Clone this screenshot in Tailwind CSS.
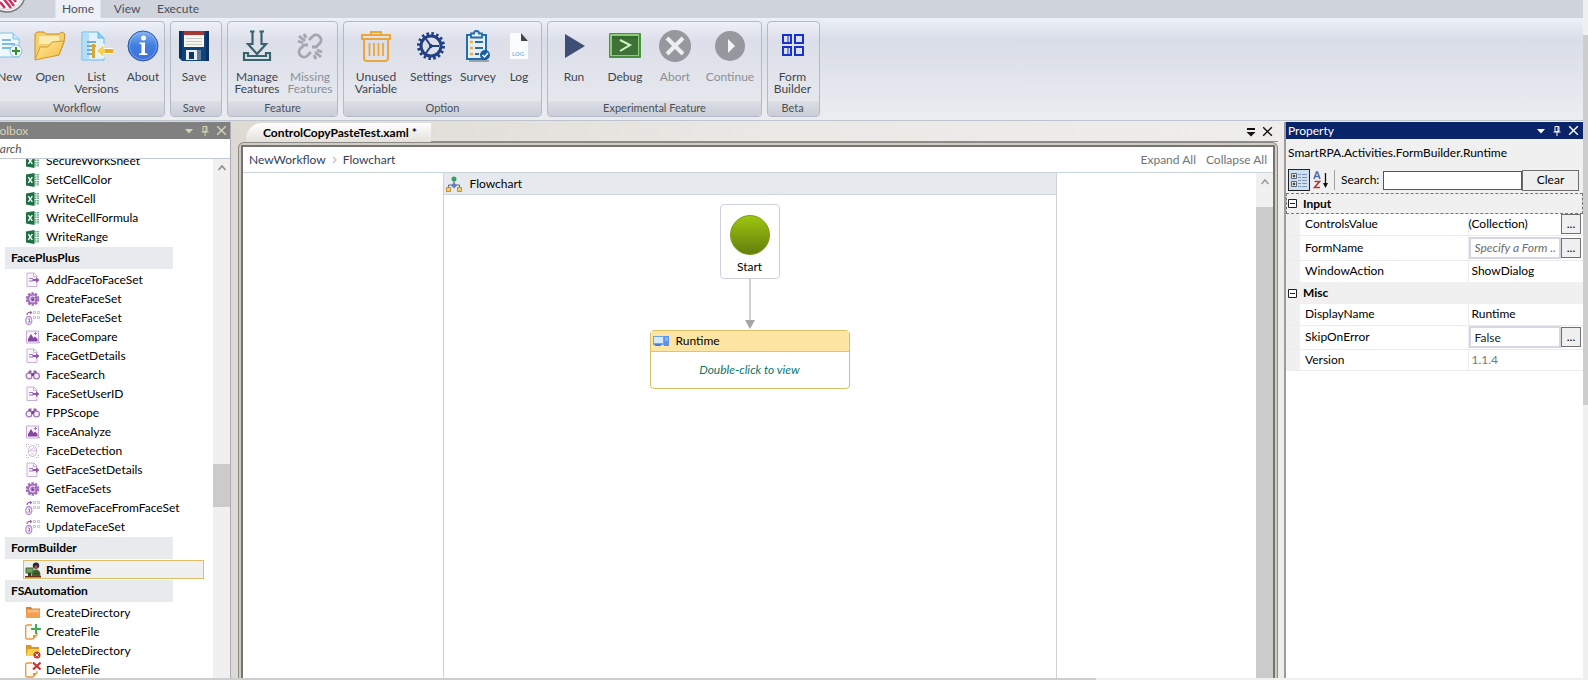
<!DOCTYPE html>
<html lang="en">
<head>
  <meta charset="UTF-8" />
  <title>ControlCopyPasteTest.xaml</title>
  <meta name="viewport" content="width=device-width, initial-scale=1" />
  <script src="https://cdn.jsdelivr.net/npm/@tailwindcss/browser@4"></script>
</head>
<body class="h-screen flex flex-col overflow-hidden bg-[#f0f0f0] font-['Lato','Open_Sans',sans-serif] text-xs text-black">

  <!-- icon sprites -->
  <svg class="hidden">
    <symbol id="i-excel" viewBox="0 0 16 16">
      <path d="M10.500 2v12M13 2v12" stroke="#6fae8a" stroke-width="2" stroke-dasharray="1.500 .8" />
      <path d="M1 2.500 9.500 1v14L1 13.500z" fill="#1d7044" />
      <path d="m3.300 5.200 4 5.600M7.300 5.200l-4 5.600" stroke="#fff" stroke-width="1.400" />
    </symbol>
    <symbol id="i-page" viewBox="0 0 16 16">
      <path d="M2 1h7l3 3v10.500H2z" fill="#fbf7fd" />
      <path d="M12 5.500V4L9 1H2v13.500h10V10" fill="none" stroke="#cbb0d8" />
      <path d="M8.500 1v3.500H12" fill="none" stroke="#cbb0d8" />
      <path d="M4 6.500h4M4 9h4" stroke="#a573bf" />
      <path d="M7.500 7h3.500V5l3.500 3L11 11V9H7.500z" fill="#8f5aa9" />
    </symbol>
    <symbol id="i-gear" viewBox="0 0 16 16">
      <circle cx="7.500" cy="8" r="5.800" fill="none" stroke="#a06abb" stroke-width="2" stroke-dasharray="2.500 1.144" />
      <circle cx="7.500" cy="8" r="5.300" fill="#a06abb" />
      <path d="M10 6A3 3 0 1 0 10 10M7.500 8h3" fill="none" stroke="#f3e9f8" stroke-width="1.200" />
      <path d="M7 7.500h2v2H7z" fill="#7a3f99" />
    </symbol>
    <symbol id="i-set" viewBox="0 0 16 16">
      <path d="M8.500 1.500h2v2h-2zM12.500 1.500h2v2h-2zM8.500 6.500h2v2h-2zM12.500 6.500h2v2h-2z" fill="none" stroke="#cfc0d8" />
      <path d="M2 5C2 3 4 2 6 2.500" fill="none" stroke="#8a6a9c" stroke-width="1.300" />
      <path d="m5 .8 2.500 1.700L5 4.500z" fill="#8a6a9c" />
      <ellipse cx="3.800" cy="10.500" rx="3" ry="4" fill="#faf5fc" stroke="#b48fc8" stroke-width="1.300" />
      <path d="M3 9h1.500v3M2.800 12h2.500" fill="none" stroke="#a06abb" />
    </symbol>
    <symbol id="i-image" viewBox="0 0 16 16">
      <path d="M1.500 2h12v12h-12z" fill="#faf5fc" stroke="#c4a9d2" />
      <path d="M3 12.500V10l3-5 2.500 4L10 7.500l2.500 2.500v2.500z" fill="#83479f" />
      <path d="M9 4.500h3M10.500 3v3" stroke="#a573bf" />
      <path d="m12 11 3 3" stroke="#b695c7" />
    </symbol>
    <symbol id="i-binoc" viewBox="0 0 16 16">
      <path d="M4 3.500h2.500v3h2v-3H11l2 4h-11z" fill="#8f5aa9" />
      <circle cx="4" cy="9" r="2.900" fill="#f8f1fb" stroke="#a678bd" stroke-width="1.300" />
      <circle cx="11.500" cy="9" r="2.900" fill="#f8f1fb" stroke="#a678bd" stroke-width="1.300" />
      <path d="M6.500 6h2.500v3H6.500z" fill="#7b4499" />
    </symbol>
    <symbol id="i-detect" viewBox="0 0 16 16">
      <path d="M1.500 4V1.500H4M11 1.500h2.500V4M1.500 12v2.500H4M11 14.500h2.500V12" fill="none" stroke="#b9a6c4" stroke-dasharray="1 1" />
      <path d="M3.500 6.500a4 4 0 0 1 8 0v3a4 4 0 0 1-8 0zM3 8h9M5 6.500c2 0 3-1 3.500-2 .5 1 1.500 2 3 2M6 11h3" fill="none" stroke="#ceb9da" />
    </symbol>
    <symbol id="i-person" viewBox="0 0 16 16">
      <circle cx="11" cy="3.600" r="3.200" fill="#272a33" />
      <path d="M9.500 3.500h3v3h-3z" fill="#a84a48" />
      <path d="M6.500 14c0-4 1.500-6.500 4.500-6.500s4.500 2.500 4.500 6.500z" fill="#43612f" />
      <path d="M1 6h7v5H1z" fill="#6fa25e" stroke="#456b3a" />
      <path d="M0 14h16v1.500H0z" fill="#6f2c20" />
      <path d="M3 11h3v3H3zM9 11h5v1H9z" fill="#2e4426" />
    </symbol>
    <symbol id="i-folder" viewBox="0 0 16 16">
      <path d="M1 2h5l1 1.500h8V13H1z" fill="#d98231" />
      <path d="M2 4.500h12.500v7.500H2z" fill="#f8bd7c" />
      <path d="M1 7.500h14V13H1z" fill="#f0a04e" />
    </symbol>
    <symbol id="i-newfile" viewBox="0 0 16 16">
      <path d="M7 1H2A1.500 1.500 0 0 0 .7 2.500v11A1.500 1.500 0 0 0 2 15h6l4-4V9" fill="#fffaf3" stroke="#e29a45" stroke-width="1.300" />
      <path d="M8 15v-4h4z" fill="#e29a45" />
      <path d="M11 0v10M6 5h10" stroke="#3fae5a" stroke-width="2" />
    </symbol>
    <symbol id="i-delfolder" viewBox="0 0 16 16">
      <path d="M1 2h5l1 2h7v9H1z" fill="#d59a21" />
      <path d="M3 6h12l-2 7H1z" fill="#f8d24e" />
      <circle cx="12" cy="12" r="3.500" fill="#c73a2c" />
      <path d="m10.500 10.500 3 3M13.500 10.500l-3 3" stroke="#fff" />
    </symbol>
    <symbol id="i-delfile" viewBox="0 0 16 16">
      <path d="M7 1H2A1.500 1.500 0 0 0 .7 2.500v11A1.500 1.500 0 0 0 2 15h6l4-4V9" fill="#fffaf3" stroke="#e29a45" stroke-width="1.300" />
      <path d="M8 15v-4h4z" fill="#e29a45" />
      <path d="m8 .5 7.500 7M15.500.5 8 7.500" stroke="#cf2a2a" stroke-width="2" />
    </symbol>
    <symbol id="i-down" viewBox="0 0 12 12"><path d="M2 4h8L6 8.500z" fill="currentColor" /></symbol>
    <symbol id="i-pin" viewBox="0 0 12 12">
      <path d="M4 1.500h4v5H4zM7 1.500v5M2.500 7h7M6 7v4" fill="none" stroke="currentColor" />
    </symbol>
    <symbol id="i-close" viewBox="0 0 12 12"><path d="m2 2 8 8M10 2l-8 8" stroke="currentColor" stroke-width="1.300" /></symbol>
    <symbol id="i-up" viewBox="0 0 10 10"><path d="m1.500 7 3.500-4 3.500 4" fill="none" stroke="currentColor" stroke-width="1.500" /></symbol>
    <symbol id="i-minus" viewBox="0 0 9 9"><path d="M.5.5h8v8h-8zM2 4.500h5" fill="#fff" stroke="#222" /></symbol>
  </svg>

  <div class="flex flex-1 min-h-0">
    <div class="flex-1 min-w-0 flex flex-col">

      <!-- ribbon -->
      <header class="bg-[#cfd3dc]">
        <nav class="flex h-[18px] items-end text-[#4a4f5a] relative pl-[55px] overflow-hidden">
          <svg class="absolute left-0 top-0" width="28" height="14" viewBox="0 0 28 14">
            <circle cx="7" cy="-6" r="18" fill="#f3f3f5" stroke="#77797f" stroke-width="1.500" />
            <circle cx="7" cy="-6" r="15.500" fill="#fff" stroke="#d0d0d4" />
            <path d="m0 2 5 6M3-2l8 10M8-2l6 8M13-2l3 4" stroke="#cf2f5c" stroke-width="2.500" />
          </svg>
          <a href="#" class="w-[46px] h-[18px] bg-[#edf0f7] border-x border-[#dfe3ec] text-center leading-[18px]">Home</a>
          <a href="#" class="w-[52px] text-center leading-[18px]">View</a>
          <a href="#" class="w-[50px] text-center leading-[18px]">Execute</a>
        </nav>
        <div class="flex gap-[5px] h-[103px] pt-[3px] pb-[3px] border-b border-[#bfc5cf] bg-linear-to-b from-[#edf0f7] from-0% via-[#d9dde7] via-22% to-[#ebedf1]">

          <section class="w-44 -ml-[11px] shrink-0 flex flex-col rounded border border-[#b4bac5] bg-linear-to-b from-[#edf0f8] via-[#dcdfe9] via-20% to-[#e8eaef] overflow-hidden">
            <div class="flex-1 flex items-start pt-2 text-[#40454f]">
              <button class="w-[39px] flex flex-col items-center leading-3 gap-[9px]">
                <svg width="32" height="32" viewBox="0 0 32 32">
                  <path d="M4 3h15l6 6v18H4z" fill="#eef8fe" stroke="#7fc1e8" /><path d="M19 3v6h6" fill="#cbe8f8" stroke="#7fc1e8" />
                  <path d="M8 10h9M8 14h13M8 18h12" stroke="#7cb9e4" stroke-width="2" />
                  <circle cx="22" cy="21" r="6" fill="#f4fbff" stroke="#82bfe2" /><path d="M22 17v8M18 21h8" stroke="#35912f" stroke-width="2" />
                </svg>
                <span>New</span>
              </button>
              <button class="w-[42px] flex flex-col items-center leading-3 gap-[9px]">
                <svg width="32" height="32" viewBox="0 0 32 32">
                  <defs><linearGradient id="gf" x2="1" y2="1"><stop stop-color="#ffe9a0" /><stop offset="1" stop-color="#f5bb3f" /></linearGradient></defs>
                  <path d="M1 29V4l2-2h7l2 2h13l3-2 3 2-1 8-5 13z" fill="#f5cf6d" stroke="#c98f27" />
                  <path d="M5 6h20v8H5z" fill="#fdebb0" />
                  <path d="m1 30 5-13h8l4-5 12-1-5 14z" fill="url(#gf)" stroke="#d29c35" />
                </svg>
                <span>Open</span>
              </button>
              <button class="w-[51px] flex flex-col items-center leading-3 gap-[9px]">
                <svg width="32" height="32" viewBox="0 0 32 32">
                  <path d="M1 2h16l6 6v22H1z" fill="#dff2fc" stroke="#67b7e6" /><path d="M2 3h6v26H2z" fill="#b4def6" /><path d="M17 2v6h6" fill="#8fcbee" stroke="#67b7e6" />
                  <path d="M6 12h9M6 16h9M6 20h7M6 24h8" stroke="#5797c9" stroke-width="1.500" />
                  <path d="M11 14h3v14h-3z" fill="#d9a62e" />
                  <path d="M32 18.500h-9V14l-8 7 8 7v-4.500h9z" fill="#f8cf59" stroke="#fff" />
                  <path d="M24 19h8v4h-8z" fill="#eda922" />
                </svg>
                <span>List<br />Versions</span>
              </button>
              <button class="w-[42px] flex flex-col items-center leading-3 gap-[9px]">
                <svg width="32" height="32" viewBox="0 0 32 32">
                  <defs><linearGradient id="gi" x2="0" y2="1"><stop stop-color="#83b2f0" /><stop offset=".5" stop-color="#3f7ee0" /><stop offset="1" stop-color="#3f6fd6" /></linearGradient></defs>
                  <circle cx="16" cy="16" r="15" fill="url(#gi)" stroke="#2c5aa8" />
                  <circle cx="16" cy="16" r="13.500" fill="none" stroke="#8fb8f3" stroke-opacity=".6" />
                  <circle cx="16.500" cy="8" r="2.500" fill="#fff" />
                  <path d="M12.500 12.500H18V23l2.500.8V25h-8.500v-1.200l2.500-.8v-8.500l-2-.8z" fill="#fff" />
                </svg>
                <span>About</span>
              </button>
            </div>
            <h2 class="h-[15px] leading-[13px] text-center text-[11px] text-[#4a4f5a] bg-linear-to-b from-[#dcdfe6] to-[#c9cdd7]">Workflow</h2>
          </section>

          <section class="w-[52px] shrink-0 flex flex-col rounded border border-[#b4bac5] bg-linear-to-b from-[#edf0f8] via-[#dcdfe9] via-20% to-[#e8eaef] overflow-hidden">
            <div class="flex-1 flex items-start pt-2 text-[#40454f]">
              <button class="w-[46px] flex flex-col items-center leading-3 gap-[9px]">
                <svg width="32" height="32" viewBox="0 0 32 32">
                  <path d="M1 1h30v30H4l-3-3z" fill="#10427c" /><path d="M1 1h3v27H1zM28 1h3v30h-3z" fill="#0b2f5e" />
                  <path d="M6 1h20v16H6z" fill="#f5f5f1" /><path d="M6 1h20v4H6z" fill="#a8382f" />
                  <path d="M8 8.500h16M8 11.500h16M8 14.500h16" stroke="#c9c9c4" />
                  <path d="M8 20h15v10H8z" fill="#e9edf0" /><path d="M11 22h5v7h-5z" fill="#0f3564" /><path d="M19 20h4v10h-4z" fill="#5f7f9c" />
                </svg>
                <span>Save</span>
              </button>
            </div>
            <h2 class="h-[15px] leading-[13px] pr-1 text-center text-[11px] text-[#4a4f5a] bg-linear-to-b from-[#dcdfe6] to-[#c9cdd7]">Save</h2>
          </section>

          <section class="w-[111px] shrink-0 flex flex-col rounded border border-[#b4bac5] bg-linear-to-b from-[#edf0f8] via-[#dcdfe9] via-20% to-[#e8eaef] overflow-hidden">
            <div class="flex-1 flex items-start pt-2 pl-0.5 text-[#40454f]">
              <button class="w-[54px] flex flex-col items-center leading-3 gap-[9px]">
                <svg width="32" height="32" viewBox="0 0 32 32" fill="none" stroke="#37646c" stroke-width="2.200">
                  <path d="M11.500 1.500V14H7l9 10 9-10h-4.500V1.500M9 1.500h4.500M18.500 1.500H23" />
                  <path d="M7 23H3v7h26v-7h-4v3H7z" />
                </svg>
                <span>Manage<br />Features</span>
              </button>
              <button disabled class="w-[52px] flex flex-col items-center leading-3 gap-[9px] text-[#8b8f97]">
                <svg width="32" height="32" viewBox="0 0 32 32" fill="none" stroke="#a3a6ad" stroke-width="2.800">
                  <path d="m15 10 4-4a5 5 0 0 1 7 7l-4 4h-4M17 22l-4 4a5 5 0 0 1-7-7l4-4h4M5 6l6 5M10 4l2 4M21 22l6 5M20 25l2 4M23 20l5 2M4 11l5 2" />
                </svg>
                <span>Missing<br />Features</span>
              </button>
            </div>
            <h2 class="h-[15px] leading-[13px] text-center text-[11px] text-[#4a4f5a] bg-linear-to-b from-[#dcdfe6] to-[#c9cdd7]">Feature</h2>
          </section>

          <section class="w-[199px] shrink-0 flex flex-col rounded border border-[#b4bac5] bg-linear-to-b from-[#edf0f8] via-[#dcdfe9] via-20% to-[#e8eaef] overflow-hidden">
            <div class="flex-1 flex items-start pt-2 pl-[3px] text-[#40454f]">
              <button class="w-[58px] flex flex-col items-center leading-3 gap-[9px]">
                <svg width="32" height="32" viewBox="0 0 32 32" fill="none" stroke="#eba63c" stroke-width="2">
                  <path d="M11 5V2h10v3M2 5h28v4H2zM4 9v19a3 3 0 0 0 3 3h18a3 3 0 0 0 3-3V9" />
                  <path d="M9.500 13v13M14 13v13M18.500 13v13M23 13v13" stroke-width="1.800" />
                </svg>
                <span>Unused<br />Variable</span>
              </button>
              <button class="w-[52px] flex flex-col items-center leading-3 gap-[9px]">
                <svg width="32" height="32" viewBox="0 0 32 32" fill="none" stroke="#213f82">
                  <circle cx="16" cy="16" r="12.500" stroke-width="3" stroke-dasharray="2.500 2.409" />
                  <circle cx="16" cy="16" r="10" stroke-width="3" />
                  <path d="M16 16h8M16 16l-5-7M16 16l-5 7" stroke-width="2" />
                  <circle cx="16" cy="16" r="1.500" fill="#213f82" />
                </svg>
                <span>Settings</span>
              </button>
              <button class="w-[42px] flex flex-col items-center leading-3 gap-[9px]">
                <svg width="32" height="32" viewBox="0 0 32 32" fill="none">
                  <path d="M7 31h20" stroke="#9aa2ac" stroke-width="2" />
                  <path d="M10 5H5v24h19V5h-5" fill="#e9eef6" stroke="#1f6fae" stroke-width="2" />
                  <path d="M9 3.500h3a2.500 2.500 0 0 1 5 0h3v4H9z" fill="#e9eef6" stroke="#1f6fae" stroke-width="1.800" />
                  <path d="M8 12h3M8 18h3M8 24h3" stroke="#e8b04a" stroke-width="2.500" />
                  <path d="M13 12h8M13 18h8M13 24h4" stroke="#1f6fae" stroke-width="1.800" />
                  <circle cx="23" cy="25" r="5" fill="#1a5f9f" /><path d="m20.500 25 2 2 3.500-4" stroke="#fff" stroke-width="1.500" />
                </svg>
                <span>Survey</span>
              </button>
              <button class="w-10 flex flex-col items-center leading-3 gap-[9px]">
                <svg width="32" height="32" viewBox="0 0 32 32">
                  <path d="M7 3h11l7 8v18H7z" fill="#fbfcfe" /><path d="m18 3 7 8h-7z" fill="#444548" />
                  <text x="9" y="26" font-size="6" font-weight="bold" fill="#7fbbe6">LOG</text>
                </svg>
                <span>Log</span>
              </button>
            </div>
            <h2 class="h-[15px] leading-[13px] text-center text-[11px] text-[#4a4f5a] bg-linear-to-b from-[#dcdfe6] to-[#c9cdd7]">Option</h2>
          </section>

          <section class="w-[215px] shrink-0 flex flex-col rounded border border-[#b4bac5] bg-linear-to-b from-[#edf0f8] via-[#dcdfe9] via-20% to-[#e8eaef] overflow-hidden">
            <div class="flex-1 flex items-start pt-2 text-[#40454f]">
              <button class="w-[52px] flex flex-col items-center leading-3 gap-[9px]">
                <svg width="32" height="32" viewBox="0 0 32 32"><path d="m7 4 20 12L7 28z" fill="#3f4e74" /></svg>
                <span>Run</span>
              </button>
              <button class="w-[50px] flex flex-col items-center leading-3 gap-[9px]">
                <svg width="32" height="32" viewBox="0 0 32 32">
                  <rect y="3" width="32" height="25" rx="1" fill="#4b9140" />
                  <rect x="1" y="4" width="29" height="22" fill="#8ccc77" />
                  <rect x="3" y="6" width="26" height="19" fill="#3f7238" /><rect x="3" y="6" width="26" height="3" fill="#346b2f" />
                  <path d="m11 10 10 5-10 6" fill="none" stroke="#d4f5c4" stroke-width="2" />
                </svg>
                <span>Debug</span>
              </button>
              <button disabled class="w-[50px] flex flex-col items-center leading-3 gap-[9px] text-[#8b8f97]">
                <svg width="32" height="32" viewBox="0 0 32 32"><circle cx="16" cy="16" r="16" fill="#96989e" /><path d="m8 8 16 16M24 8 8 24" stroke="#eceef2" stroke-width="4" /></svg>
                <span>Abort</span>
              </button>
              <button disabled class="w-[60px] flex flex-col items-center leading-3 gap-[9px] text-[#8b8f97]">
                <svg width="32" height="32" viewBox="0 0 32 32"><circle cx="16" cy="16" r="15" fill="#96989e" /><path d="m14 9 7 7-7 7z" fill="#f2f3f6" /></svg>
                <span>Continue</span>
              </button>
            </div>
            <h2 class="h-[15px] leading-[13px] text-center text-[11px] text-[#4a4f5a] bg-linear-to-b from-[#dcdfe6] to-[#c9cdd7]">Experimental Feature</h2>
          </section>

          <section class="w-[53px] shrink-0 flex flex-col rounded border border-[#b4bac5] bg-linear-to-b from-[#edf0f8] via-[#dcdfe9] via-20% to-[#e8eaef] overflow-hidden">
            <div class="flex-1 flex items-start justify-center pt-2 pr-0.5 text-[#40454f]">
              <button class="flex flex-col items-center leading-3 gap-[9px]">
                <svg width="32" height="32" viewBox="0 0 32 32" fill="none" stroke="#1733cf" stroke-width="2">
                  <path d="M6 5h8v8H6zM18 5h8v8h-8zM6 17h8v8H6zM18 17h8v8h-8z" /><path d="M11 5v8M11 17v8" stroke-width="1" />
                </svg>
                <span>Form<br />Builder</span>
              </button>
            </div>
            <h2 class="h-[15px] leading-[13px] pr-0.5 text-center text-[11px] text-[#4a4f5a] bg-linear-to-b from-[#dcdfe6] to-[#c9cdd7]">Beta</h2>
          </section>
        </div>
      </header>

      <!-- workspace -->
      <div class="flex-1 min-h-0 flex pt-px bg-linear-to-r from-[#d8d4cb] via-[#ebe9e6] to-[#f0f0f0]">

        <!-- toolbox -->
        <aside class="w-[231px] shrink-0 flex flex-col border-r border-[#a9adb8] bg-white overflow-hidden">
          <div class="h-[17px] shrink-0 flex items-center bg-[#808080] text-[#d6d2b4] pr-0.5 gap-1">
            <h2 class="flex-1 -ml-[13px]">Toolbox</h2>
            <button aria-label="Options"><svg width="12" height="12"><use href="#i-down" /></svg></button>
            <button aria-label="Pin"><svg width="12" height="12"><use href="#i-pin" /></svg></button>
            <button aria-label="Close"><svg width="13" height="13"><use href="#i-close" /></svg></button>
          </div>
          <div class="h-5 shrink-0 flex border-b border-[#c3c8d2]">
            <input type="text" aria-label="Search" placeholder="Search" class="flex-1 -ml-3 italic outline-none placeholder:text-[#555]" />
          </div>
          <div class="flex-1 min-h-0 flex">
            <div id="tools" class="flex-1 overflow-hidden"></div>
            <div class="w-[17px] shrink-0 bg-[#f0f0f0] flex flex-col items-center text-[#8c8c8c] pt-1">
              <svg width="10" height="10"><use href="#i-up" /></svg>
              <div class="basis-[291px] shrink-0"></div>
              <div class="w-full h-[43px] shrink-0 bg-[#cbcbcb]"></div>
            </div>
          </div>
        </aside>

        <!-- designer -->
        <main class="flex-1 min-w-0 flex flex-col ml-[7px] mr-1.5">
          <div class="h-5 shrink-0 flex items-end">
            <div class="ml-2 h-[19px] w-[185px] rounded-tl-2xl bg-linear-to-b from-white to-[#e4e1db] font-bold leading-[19px] pl-[17px] whitespace-nowrap">ControlCopyPasteTest.xaml *</div>
            <div class="flex-1 h-5 flex items-center justify-end gap-1 pr-1 border-b border-[#8f8d88] text-[#111]">
              <button aria-label="Documents"><svg width="12" height="12" viewBox="0 0 12 12"><path d="M2 2h8v2H2zM1.500 6h9L6 10.500z" fill="currentColor" /></svg></button>
              <button aria-label="Close document"><svg width="13" height="13"><use href="#i-close" /></svg></button>
            </div>
          </div>
          <div class="flex-1 min-h-0 flex border-x border-t border-[#8c8a85] rounded-t-md bg-[#d0cdc6] pt-0.5 px-0.5">
            <div class="flex-1 min-w-0 flex flex-col border-x-2 border-t-2 border-[#76746f] bg-white">
              <div class="h-[26px] shrink-0 flex items-center gap-3 px-1.5 border-b border-[#c9d3da] text-[#6f7378]">
                <nav class="flex-1 flex items-center gap-1.5 text-[#33405a]">
                  <a href="#">NewWorkflow</a>
                  <svg width="5" height="8" viewBox="0 0 5 8"><path d="m1 1 3 3-3 3" fill="none" stroke="#c3c9d1" stroke-width="1.500" /></svg>
                  <a href="#">Flowchart</a>
                </nav>
                <button>Expand All</button>
                <button class="-ml-0.5">Collapse All</button>
              </div>
              <div class="flex-1 min-h-0 flex">
                <div class="flex-1 min-w-0 flex justify-center">
                  <div class="w-[614px] flex flex-col border-x border-[#cdd1d8]">
                    <div class="h-[22px] shrink-0 flex items-center gap-2 pl-0.5 bg-[#e6eaee] border-b border-[#cdd6de]">
                      <svg width="16" height="16" viewBox="0 0 16 16">
                        <path d="M8 4v4M8 9H2.500v3M8 9h5.500v3" stroke="#667" fill="none" />
                        <circle cx="8" cy="3" r="2.500" fill="#35a161" /><path d="m8 6.500 3 3-3 3-3-3z" fill="#5c7fc4" />
                        <path d="M.5 11.500h4v4h-4zM11.500 11.500h4v4h-4z" fill="#f3cc6f" stroke="#c48f2c" />
                      </svg>
                      <span>Flowchart</span>
                    </div>
                    <div class="flex flex-col items-center pt-[9px]">
                      <div class="w-[60px] h-[75px] flex flex-col items-center pt-2.5 gap-1 rounded border border-[#cdd1dd] bg-white">
                        <div class="size-10 rounded-full border border-[#7a9a1c] bg-linear-to-b from-[#9dc60f] to-[#647f0c]"></div>
                        <span>Start</span>
                      </div>
                      <svg width="10" height="51" viewBox="0 0 10 51"><path d="M5 0v42" stroke="#cdd1d8" stroke-width="2" /><path d="M0 41h10L5 50z" fill="#a6a6a6" /></svg>
                      <div class="w-[200px] rounded-sm border border-[#d9bf66] bg-white">
                        <div class="h-[21px] flex items-center gap-1.5 pl-0.5 bg-[#ffe5a3] border-b border-[#e3c46c]">
                          <svg width="17" height="14" viewBox="0 0 17 14"><path d="M0 2h12v9H0z" fill="#69a4ee" /><path d="M1 3h9v6H1z" fill="#d9e9fc" /><path d="M11 2h5v10h-5z" fill="#5c93e8" /><path d="M12 4h3M12 6h3" stroke="#b6d2fa" /><path d="M2 10h6v2H2z" fill="#4a7fd8" /></svg>
                          <span>Runtime</span>
                        </div>
                        <p class="h-9 leading-9 text-center italic text-[#0d7568]">Double-click to view</p>
                      </div>
                    </div>
                  </div>
                </div>
                <div class="w-[17px] shrink-0 bg-[#f0f0f0] flex flex-col items-center text-[#9a9a9a] pt-1">
                  <svg width="10" height="10"><use href="#i-up" /></svg>
                  <div class="mt-5 flex-1 w-full bg-[#cbcbcb]"></div>
                </div>
              </div>
            </div>
          </div>
        </main>

        <!-- property -->
        <aside class="w-[299px] shrink-0 flex flex-col border-l-2 border-[#9c9c9c] bg-white">
          <div class="h-[17px] shrink-0 flex items-center bg-[#0a246a] text-white pl-0.5 pr-[3px] gap-1">
            <h2 class="flex-1">Property</h2>
            <button aria-label="Options"><svg width="12" height="12"><use href="#i-down" /></svg></button>
            <button aria-label="Pin"><svg width="12" height="12"><use href="#i-pin" /></svg></button>
            <button aria-label="Close"><svg width="13" height="13"><use href="#i-close" /></svg></button>
          </div>
          <div class="bg-[#f0f0f0] h-[54px] shrink-0">
            <p class="h-[30px] leading-[28px] pl-0.5 whitespace-nowrap">SmartRPA.Activities.FormBuilder.Runtime</p>
            <div class="flex items-center h-[22px] pl-0.5 pr-1">
              <button aria-label="Categorized" class="size-[22px] border border-[#222] bg-[#cfe0f3] flex items-center justify-center">
                <svg width="18" height="18" viewBox="0 0 18 18"><path d="M1.500 2.500h5v5h-5zM1.500 10.500h5v5h-5z" fill="#fff" stroke="#567" /><path d="M2.500 5h3M4 3.500v3M2.500 13h3M4 11.500v3" stroke="#111" /><path d="M8 3.500h3M12 3.500h5M8 6.500h3M12 6.500h5M8 9.500h3M12 9.500h5M8 12.500h3M12 12.500h5M8 15.500h3M12 15.500h5" stroke="#7c97ba" /></svg>
              </button>
              <button aria-label="Alphabetical" class="ml-[3px] mr-[5px]">
                <svg width="16" height="18" viewBox="0 0 16 18">
                  <path d="m1 8 2.500-7h1L7 8M2 5.500h4" fill="none" stroke="#4a68ae" stroke-width="1.500" />
                  <path d="M1.500 10.500h5l-5 6H7" fill="none" stroke="#b3383c" stroke-width="1.700" />
                  <path d="M12.500 2v13" stroke="#111" stroke-width="1.300" /><path d="M10 12h5l-2.500 5z" fill="#111" />
                </svg>
              </button>
              <label for="prop-search" class="w-[49px] border-l border-[#a0a0a0] pl-1.5 h-5 leading-5">Search:</label>
              <input id="prop-search" type="text" class="flex-1 min-w-0 h-[19px] bg-white border border-[#555]" />
              <button class="w-[57px] h-[21px] border border-[#707070] bg-[#efefef]">Clear</button>
            </div>
          </div>
          <table class="w-full table-fixed border-collapse bg-white">
            <colgroup><col class="w-[14px]" /><col class="w-[168px]" /><col /><col class="w-[22px]" /></colgroup>
            <tbody>
              <tr class="h-[21px] bg-[#f0f0f0] outline-1 outline-dashed -outline-offset-1 outline-[#777]">
                <td class="pl-0.5"><svg width="9" height="9"><use href="#i-minus" /></svg></td>
                <th colspan="3" class="text-left pl-[3px]">Input</th>
              </tr>
              <tr class="h-[21px] border-b border-[#ececec]">
                <td class="bg-[#f0f0f0]"></td><td class="pl-[5px] border-r border-[#ececec]">ControlsValue</td><td>(Collection)</td>
                <td><button class="block w-5 h-5 leading-3 border border-[#707070] bg-[#f0f0f0]">...</button></td>
              </tr>
              <tr class="h-[25px] border-b border-[#ececec]">
                <td class="bg-[#f0f0f0]"></td><td class="pl-[5px] border-r border-[#ececec]"><label for="form-name">FormName</label></td>
                <td><input id="form-name" type="text" placeholder="Specify a Form ..." class="block w-full h-[22px] px-1 border-2 border-[#d5d7e2] italic placeholder:text-[#6d6d6d]" /></td>
                <td><button class="block w-5 h-5 leading-3 border border-[#707070] bg-[#f0f0f0]">...</button></td>
              </tr>
              <tr class="h-[22px]">
                <td class="bg-[#f0f0f0]"></td><td class="pl-[5px] border-r border-[#ececec]">WindowAction</td><td colspan="2" class="pl-[3px]">ShowDialog</td>
              </tr>
              <tr class="h-[22px] bg-[#f0f0f0]">
                <td class="pl-0.5"><svg width="9" height="9"><use href="#i-minus" /></svg></td>
                <th colspan="3" class="text-left pl-[3px]">Misc</th>
              </tr>
              <tr class="h-[21px] border-b border-[#ececec]">
                <td class="bg-[#f0f0f0]"></td><td class="pl-[5px] border-r border-[#ececec]">DisplayName</td><td colspan="2" class="pl-[3px]">Runtime</td>
              </tr>
              <tr class="h-6 border-b border-[#ececec]">
                <td class="bg-[#f0f0f0]"></td><td class="pl-[5px] border-r border-[#ececec]"><label for="skip">SkipOnError</label></td>
                <td><input id="skip" type="text" value="False" class="block w-full h-[22px] px-1 border-2 border-[#d5d7e2] text-[#223]" /></td>
                <td><button class="block w-5 h-5 leading-3 border border-[#707070] bg-[#f0f0f0]">...</button></td>
              </tr>
              <tr class="h-[21px] border-b border-[#ececec]">
                <td class="bg-[#f0f0f0]"></td><td class="pl-[5px] border-r border-[#ececec]">Version</td><td colspan="2" class="pl-[3px] text-[#7a7a7a]">1.1.4</td>
              </tr>
            </tbody>
          </table>
        </aside>
      </div>
    </div>

    <!-- window scrollbar -->
    <div class="w-[5px] shrink-0 bg-[#f0f0f0] pt-[35px]"><div class="h-[370px] bg-[#cdcdcd]"></div></div>
  </div>
  <div class="h-0.5 shrink-0 bg-[#f0f0f0]"><div class="h-full w-[69%] bg-[#cdcdcd]"></div></div>

  <script>
    const groups = [
      [null, [['excel', 'SecureWorkSheet'], ['excel', 'SetCellColor'], ['excel', 'WriteCell'], ['excel', 'WriteCellFormula'], ['excel', 'WriteRange']]],
      ['FacePlusPlus', [['page', 'AddFaceToFaceSet'], ['gear', 'CreateFaceSet'], ['set', 'DeleteFaceSet'], ['image', 'FaceCompare'],
        ['page', 'FaceGetDetails'], ['binoc', 'FaceSearch'], ['page', 'FaceSetUserID'], ['binoc', 'FPPScope'], ['image', 'FaceAnalyze'],
        ['detect', 'FaceDetection'], ['page', 'GetFaceSetDetails'], ['gear', 'GetFaceSets'], ['set', 'RemoveFaceFromFaceSet'], ['set', 'UpdateFaceSet']]],
      ['FormBuilder', [['person', 'Runtime', true]]],
      ['FSAutomation', [['folder', 'CreateDirectory'], ['newfile', 'CreateFile'], ['delfolder', 'DeleteDirectory'], ['delfile', 'DeleteFile']]],
    ];

    const row = ([icon, name, selected]) => `
      <li class="${selected ? 'h-[19px] ml-[23px] mr-[9px] pl-px flex items-center gap-1 border border-[#e0bd62] bg-[#f0f0f0] font-bold' : 'h-[19px] ml-[25px] flex items-center gap-1'}">
        <svg width="16" height="16" class="shrink-0"><use href="#i-${icon}" /></svg><span class="pl-px">${name}</span>
      </li>`;

    document.getElementById('tools').innerHTML = groups.map(([title, items]) => title
      ? `<h3 class="h-[22px] leading-[22px] ml-[5px] mr-10 pl-1.5 bg-[#e8ebee] font-bold">${title}</h3><ul class="py-px">${items.map(row).join('')}</ul>`
      : `<ul class="-mt-2 pb-px">${items.map(row).join('')}</ul>`).join('');
  </script>

</body>
</html>
